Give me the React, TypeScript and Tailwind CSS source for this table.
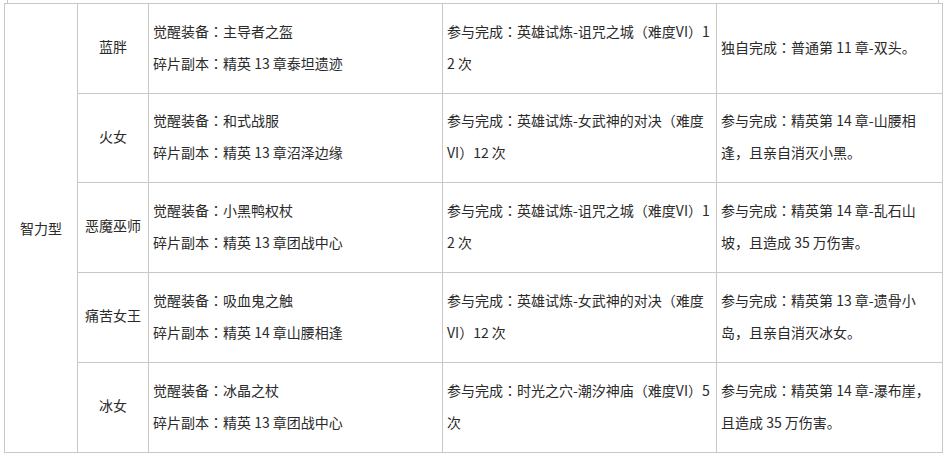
const rows = [
	{
		name: "蓝胖",
		h: 90,
		gear: ["觉醒装备：主导者之盔", "碎片副本：精英 13 章泰坦遗迹"],
		join: ["参与完成：英雄试炼-诅咒之城（难度VI）1", "2 次"],
		solo: ["独自完成：普通第 11 章-双头。"],
	},
	{
		name: "火女",
		h: 89,
		gear: ["觉醒装备：和式战服", "碎片副本：精英 13 章沼泽边缘"],
		join: ["参与完成：英雄试炼-女武神的对决（难度", "VI）12 次"],
		solo: ["参与完成：精英第 14 章-山腰相", "逢，且亲自消灭小黑。"],
	},
	{
		name: "恶魔巫师",
		h: 90,
		gear: ["觉醒装备：小黑鸭权杖", "碎片副本：精英 13 章团战中心"],
		join: ["参与完成：英雄试炼-诅咒之城（难度VI）1", "2 次"],
		solo: ["参与完成：精英第 14 章-乱石山", "坡，且造成 35 万伤害。"],
	},
	{
		name: "痛苦女王",
		h: 90,
		gear: ["觉醒装备：吸血鬼之触", "碎片副本：精英 14 章山腰相逢"],
		join: ["参与完成：英雄试炼-女武神的对决（难度", "VI）12 次"],
		solo: ["参与完成：精英第 13 章-遗骨小", "岛，且亲自消灭冰女。"],
	},
	{
		name: "冰女",
		h: 90,
		gear: ["觉醒装备：冰晶之杖", "碎片副本：精英 13 章团战中心"],
		join: ["参与完成：时光之穴-潮汐神庙（难度VI）5", "次"],
		solo: ["参与完成：精英第 14 章-瀑布崖，", "且造成 35 万伤害。"],
	},
];

// centred colon, as the source font draws it
function Text({ s }: { s: string }) {
	const parts = s.split("：");
	return (
		<>
			{parts.map((p, i) => (
				<span key={i}>
					{i > 0 && <span style={{ fontFamily: '"Noto Sans CJK TC", sans-serif' }}>：</span>}
					{p}
				</span>
			))}
		</>
	);
}

function Lines({ lines }: { lines: string[] }) {
	return (
		<>
			{lines.map((l, i) => (
				<div key={i} className="whitespace-nowrap leading-[32px]">
					<Text s={l} />
				</div>
			))}
		</>
	);
}

const cell = "border border-[#c8c8c8] px-[4px] pb-[4px] align-middle";

export default function App() {
	return (
		<div
			className="w-[946px] h-[456px] bg-white text-[14px] text-[#2a2a2a]"
			style={{ fontFamily: '"Noto Sans CJK SC", "Noto Sans", sans-serif' }}
		>
			<div className="h-[3px] mx-[7px] border-x border-[#c8c8c8]" />
			<table className="ml-[4px] w-[938px] table-fixed border-collapse">
				<colgroup>
					<col className="w-[73px]" />
					<col className="w-[71px]" />
					<col className="w-[294px]" />
					<col className="w-[274px]" />
					<col className="w-[226px]" />
				</colgroup>
				<tbody>
					{rows.map((r, i) => (
						<tr key={r.name} style={{ height: r.h }}>
							{i === 0 && (
								<td rowSpan={5} className="border border-[#c8c8c8] text-center align-middle">
									智力型
								</td>
							)}
							<td className="border border-[#c8c8c8] pb-[4px] text-center align-middle whitespace-nowrap">{r.name}</td>
							<td className={cell}>
								<Lines lines={r.gear} />
							</td>
							<td className={cell}>
								<Lines lines={r.join} />
							</td>
							<td className={cell}>
								<Lines lines={r.solo} />
							</td>
						</tr>
					))}
				</tbody>
			</table>
		</div>
	);
}
